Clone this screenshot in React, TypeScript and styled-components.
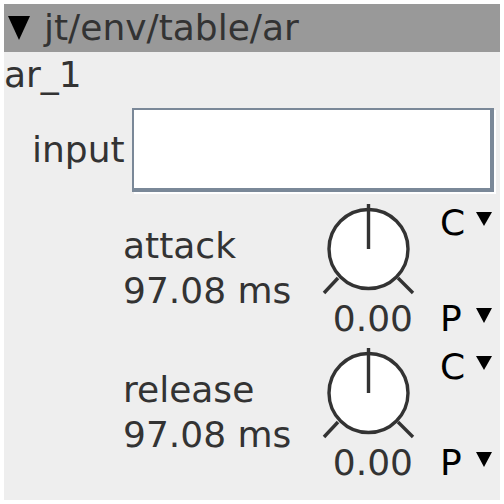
import React from "react";
import styled, { createGlobalStyle } from "styled-components";

const GlobalStyle = createGlobalStyle`
  body {
    margin: 4px;
    background: #ffffff;
  }
`;

type Param = { name: string, value: string, knob: string };

const params: Param[] = [
	{ name: "attack", value: "97.08 ms", knob: "0.00" },
	{ name: "release", value: "97.08 ms", knob: "0.00" }
];

const Caret = ({ w, h }: { w: number, h: number }) => (
	<svg width={w} height={h} viewBox={`0 0 ${w} ${h}`}>
		<polygon points={`0,0 ${w},0 ${w / 2},${h}`} fill="#000" />
	</svg>
);

const Knob = () => (
	<svg width="100" height="100" viewBox="0 0 100 100">
		<g stroke="#333" strokeWidth="3.4" fill="none" strokeLinecap="butt">
			<circle cx="48.5" cy="49" r="39.5" fill="#fff" />
			<line x1="48.5" y1="4" x2="48.5" y2="49" />
			<line x1="18" y1="78" x2="4" y2="93" />
			<line x1="78" y1="78" x2="93" y2="93" />
		</g>
	</svg>
);

const App = () => {
	return (
		<>
			<GlobalStyle />
			<Panel>
				<Header>
					<Caret w={22} h={24} />
					<Path>jt/env/table/ar</Path>
				</Header>
				<Name>ar_1</Name>
				<InputRow>
					<Label>input</Label>
					<Field />
				</InputRow>
				{params.map((p) => (
					<ParamRow key={p.name}>
						<ParamText>
							<div>{p.name}</div>
							<div>{p.value}</div>
						</ParamText>
						<KnobCol>
							<Knob />
							<KnobValue>{p.knob}</KnobValue>
						</KnobCol>
						<ModeCol>
							<Mode>
								<Letter>C</Letter>
								<Caret w={16} h={14} />
							</Mode>
							<Mode $bottom>
								<Letter>P</Letter>
								<Caret w={16} h={15} />
							</Mode>
						</ModeCol>
					</ParamRow>
				))}
			</Panel>
		</>
	);
};

const Panel = styled.div`
	width: 496px;
	height: 496px;
	background: #eeeeee;
	color: #333333;
	font-family: "DejaVu Sans", Verdana, sans-serif;
	font-size: 36px;
	display: flex;
	flex-direction: column;
	overflow: hidden;
`;

const Header = styled.div`
	height: 48px;
	flex-shrink: 0;
	background: #999999;
	display: flex;
	align-items: center;
	padding-left: 4px;
	line-height: 42px;
`;

const Path = styled.span`
	margin-left: 14px;
`;

const Name = styled.div`
	height: 48px;
	line-height: 45px;
	flex-shrink: 0;
`;

const InputRow = styled.div`
	display: flex;
	align-items: center;
	margin: 8px 0;
	padding-left: 28px;
	flex-shrink: 0;
`;

const Label = styled.span`
	line-height: 42px;
	margin-right: 7px;
`;

const Field = styled.div`
	width: 356px;
	height: 78px;
	background: #ffffff;
	border-style: solid;
	border-color: #7a8898;
	border-width: 2px 4px 4px 2px;
	box-shadow: 2px 2px 0 #ffffff;
`;

const ParamRow = styled.div`
	display: grid;
	grid-template-columns: 197px 100px 1fr;
	height: 144px;
	flex-shrink: 0;
	padding-left: 119px;
`;

const ParamText = styled.div`
	line-height: 45px;
	margin-top: 23px;
`;

const KnobCol = styled.div`
	display: flex;
	flex-direction: column;
	svg {
		display: block;
	}
`;

const KnobValue = styled.div`
	line-height: 38px;
	text-align: right;
	padding-right: 7px;
`;

const ModeCol = styled.div`
	display: flex;
	flex-direction: column;
	padding-left: 20px;
	padding-top: 2px;
	color: #000000;
`;

const Mode = styled.div<{ $bottom?: boolean }>`
	display: flex;
	align-items: flex-start;
	line-height: 41px;
	margin-top: ${props => props.$bottom ? "55px" : "0"};
	svg {
		margin-top: 10px;
	}
`;

const Letter = styled.span`
	width: 36px;
`;

export default App;
